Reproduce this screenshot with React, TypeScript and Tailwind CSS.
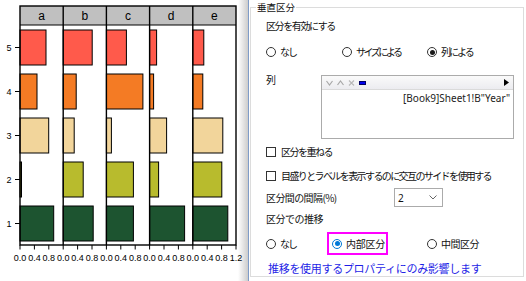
import React from 'react'

const jp = "font-['Noto_Sans_CJK_JP',sans-serif]"

// bar chart data: one entry per panel, bars listed from row 5 down to row 1
const panels = ['a', 'b', 'c', 'd', 'e']
const rowY = [30, 74, 118, 162, 206]
const rowColors = ['#FF5A4B', '#F47B24', '#F2D59B', '#B8BB2D', '#1D5430']
const widths = [
    [26, 17, 28.7, 1.5, 33.7],
    [29, 13, 11, 20, 30],
    [20, 36.5, 5, 27, 27],
    [7, 4, 17, 9, 35],
    [11, 10, 30, 29, 35],
]

const X0 = 20
const PW = 43.2

function Chart() {
    return (
        <svg width="249" height="281" viewBox="0 0 249 281" className="block shrink-0">
            <defs>
                <linearGradient id="shade" x1="0" x2="1" y1="0" y2="0">
                    <stop offset="0" stopColor="#ffffff" />
                    <stop offset="1" stopColor="#CCCCCC" />
                </linearGradient>
            </defs>
            <rect x="0" y="0" width="238" height="281" fill="#ffffff" />
            <rect x="238" y="0" width="10" height="281" fill="url(#shade)" />
            <rect x="248" y="0" width="1" height="281" fill="#7F9CC8" />
            {/* header strip */}
            <rect x={X0} y="6" width={PW * 5} height="19" fill="#C0C0C0" />
            {panels.map((p, i) => (
                <text key={p} x={X0 + PW * i + PW / 2} y="20" textAnchor="middle" fontSize="12" fontFamily="Liberation Sans, sans-serif" fill="#000">
                    {p}
                </text>
            ))}
            {/* bars */}
            {panels.map((p, i) =>
                widths[i].map((w, r) => (
                    <rect key={p + r} x={X0 + PW * i} y={rowY[r]} width={w} height="35" fill={rowColors[r]} stroke="#000" strokeWidth="1" />
                ))
            )}
            {/* frame + dividers */}
            <rect x={X0} y="6" width={PW * 5} height="239" fill="none" stroke="#000" strokeWidth="1.4" />
            <line x1={X0} y1="25" x2={X0 + PW * 5} y2="25" stroke="#000" strokeWidth="1.2" />
            {[1, 2, 3, 4].map((i) => (
                <line key={i} x1={X0 + PW * i} y1="6" x2={X0 + PW * i} y2="245" stroke="#000" strokeWidth="1.4" />
            ))}
            {/* y axis */}
            {[5, 4, 3, 2, 1].map((n, r) => (
                <g key={n}>
                    <line x1="15" y1={rowY[r] + 17.5} x2={X0} y2={rowY[r] + 17.5} stroke="#000" strokeWidth="1" />
                    <text x="9" y={rowY[r] + 21} textAnchor="middle" fontSize="9" fontFamily="Liberation Sans, sans-serif" fill="#000">
                        {n}
                    </text>
                </g>
            ))}
            {/* x axis */}
            {panels.map((p, i) =>
                ['0.0', '0.4', '0.8'].map((t, k) => {
                    const x = X0 + PW * i + k * 14.4
                    return (
                        <g key={p + t}>
                            <line x1={x} y1="245" x2={x} y2="249.5" stroke="#000" strokeWidth="1" />
                            <text x={x} y="261" textAnchor="middle" fontSize="9" fontFamily="Liberation Sans, sans-serif" fill="#000">
                                {t}
                            </text>
                        </g>
                    )
                })
            )}
            <line x1={X0 + PW * 5} y1="245" x2={X0 + PW * 5} y2="249.5" stroke="#000" strokeWidth="1" />
            <text x={X0 + PW * 5} y="261" textAnchor="middle" fontSize="9" fontFamily="Liberation Sans, sans-serif" fill="#000">
                1.2
            </text>
        </svg>
    )
}

function Radio({ label, checked = false, blue = false, track = '' }: { label: string; checked?: boolean; blue?: boolean; track?: string }) {
    return (
        <div className="flex items-center gap-[4px]">
            <span className={`w-[10px] h-[10px] shrink-0 rounded-full border bg-white flex items-center justify-center ${blue ? 'border-[#0078D7]' : 'border-[#333333]'}`}>
                {checked && <span className={`w-[5px] h-[5px] rounded-full ${blue ? 'bg-[#0078D7]' : 'bg-[#1a1a1a]'}`} />}
            </span>
            <span className={`whitespace-nowrap ${track}`}>{label}</span>
        </div>
    )
}

function Check({ label, track = '' }: { label: string; track?: string }) {
    return (
        <div className="flex items-center gap-[5px] h-[16px]">
            <span className="w-[10px] h-[10px] shrink-0 border border-[#333333] bg-white" />
            <span className={`whitespace-nowrap ${track}`}>{label}</span>
        </div>
    )
}

function ListBox() {
    return (
        <div className="w-[193px] shrink-0 h-[64px] border border-[#ABABAB] bg-white flex flex-col">
            <div className="h-[14px] border-b border-[#DADADA] bg-gradient-to-b from-[#FAFAFA] to-[#ECECF0] flex items-center pl-[4px] pr-[4px] gap-[4px]">
                <svg width="7" height="6" viewBox="0 0 7 6">
                    <path d="M0.5 1 L3.5 5 L6.5 1" fill="none" stroke="#A8A8A8" strokeWidth="1.2" />
                </svg>
                <svg width="7" height="6" viewBox="0 0 7 6">
                    <path d="M0.5 5 L3.5 1 L6.5 5" fill="none" stroke="#A8A8A8" strokeWidth="1.2" />
                </svg>
                <svg width="7" height="6" viewBox="0 0 7 6">
                    <path d="M1 0.5 L6 5.5 M6 0.5 L1 5.5" fill="none" stroke="#B8B8B8" strokeWidth="1.1" />
                </svg>
                <span className="w-[7px] h-[4px] bg-[#0000F0] border border-[#000060]" />
                <span className="flex-1" />
                <svg width="5" height="7" viewBox="0 0 5 7">
                    <path d="M0 0 L5 3.5 L0 7 Z" fill="#000" />
                </svg>
            </div>
            <div className="flex justify-end pr-[3px] pt-[1px] text-[10px] leading-[14px] font-['Noto_Sans',sans-serif] text-[#222] whitespace-nowrap">
                [Book9]Sheet1!B"Year"
            </div>
        </div>
    )
}

function Dialog() {
    return (
        <div className={`w-[277px] shrink-0 bg-white h-[281px] text-[10px] leading-[16px] text-[#111] ${jp}`}>
            {/* group box frame: the top edge is drawn by the title row */}
            <div className="ml-px mr-[2px] mt-[7px] h-[270px] border-x border-b border-[#DCDCDC] flex flex-col">
                <div className="-mt-[7px] h-[14px] flex items-center">
                    <div className="w-[5px] h-px bg-[#DCDCDC]" />
                    <span className="px-[1px] text-[9.5px] leading-[14px]">垂直区分</span>
                    <div className="flex-1 h-px bg-[#DCDCDC]" />
                </div>
                <div className="pl-[15px] flex flex-col">
                    <div className="mt-[4px] h-[16px] tracking-[-1.4px]">区分を有効にする</div>
                    <div className="mt-[10px] h-[16px] flex items-center">
                        <div className="w-[76px] shrink-0"><Radio label="なし" track="tracking-[-2px]" /></div>
                        <div className="w-[85px] shrink-0"><Radio label="サイズによる" track="tracking-[-2.5px]" /></div>
                        <Radio label="列による" checked track="tracking-[-2px]" />
                    </div>
                    <div className="mt-[15px] flex items-start">
                        <div className="w-[55px] shrink-0 leading-[10px]">列</div>
                        <ListBox />
                    </div>
                    <div className="mt-[5px]"><Check label="区分を重ねる" track="tracking-[-1.5px]" /></div>
                    <div className="mt-[8px]"><Check label="目盛りとラベルを表示するのに交互のサイドを使用する" track="tracking-[-1.6px]" /></div>
                    <div className="mt-[4px] flex items-center">
                        <div className="w-[128px] shrink-0 tracking-[-0.6px]">区分間の間隔(%)</div>
                        <div className="w-[49px] shrink-0 h-[19px] border border-[#ABABAB] flex items-center justify-between pl-[3px] pr-[5px] font-['Noto_Sans',sans-serif]">
                            <span className="text-[10px]">2</span>
                            <svg width="8" height="5" viewBox="0 0 8 5">
                                <path d="M0.5 0.5 L4 4 L7.5 0.5" fill="none" stroke="#666" strokeWidth="1" />
                            </svg>
                        </div>
                    </div>
                    <div className="mt-[4px] h-[16px] tracking-[-0.5px]">区分での推移</div>
                    <div className="mt-[5px] h-[23px] flex items-center">
                        <div className="w-[61px] shrink-0"><Radio label="なし" track="tracking-[-2px]" /></div>
                        <div className="w-[61px] shrink-0 h-[23px] border-2 border-[#FF00FF] flex items-center pl-[3px]">
                            <Radio label="内部区分" checked blue track="tracking-[-0.25px]" />
                        </div>
                        <div className="ml-[39px]"><Radio label="中間区分" track="tracking-[-0.5px]" /></div>
                    </div>
                    <div className="mt-[5px] h-[16px] pl-[2px] text-[11px] tracking-[-0.3px] text-[#1E1EE6] whitespace-nowrap">推移を使用するプロパティにのみ影響します</div>
                </div>
            </div>
        </div>
    )
}

export default function App() {
    return (
        <div className="w-[526px] h-[281px] flex overflow-hidden bg-white">
            <Chart />
            <Dialog />
        </div>
    )
}
